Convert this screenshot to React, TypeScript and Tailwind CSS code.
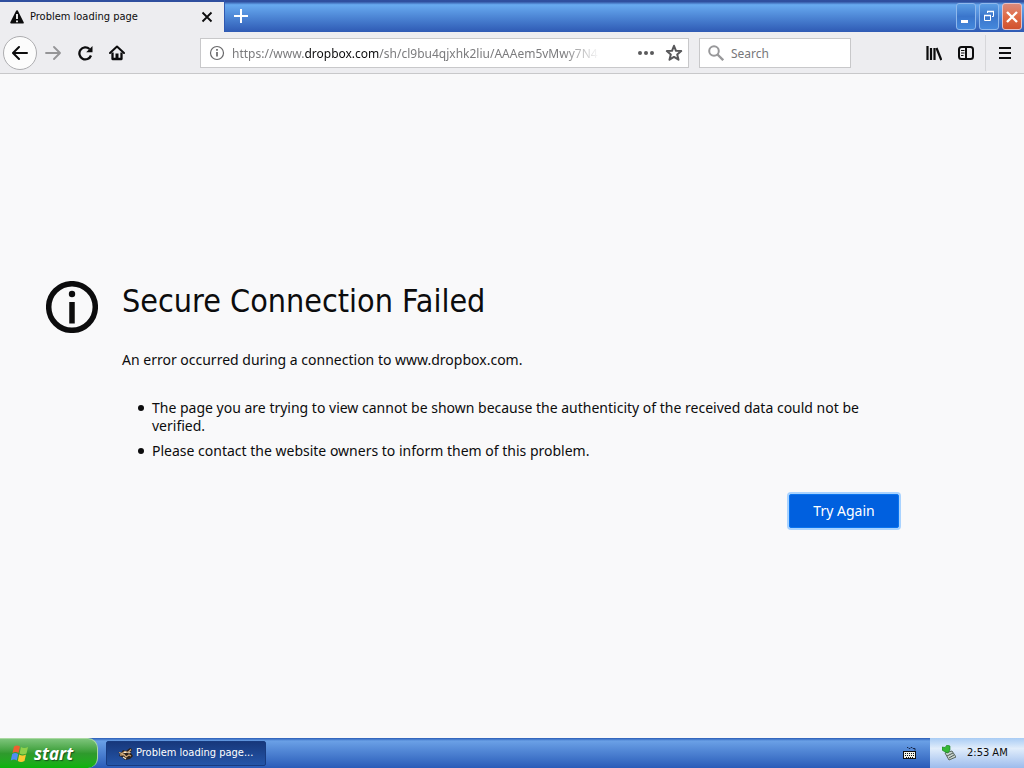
import React from 'react';

const uiFont = "font-['Noto_Sans','DejaVu_Sans_Condensed',sans-serif]";
const narrowFont = "font-['DejaVu_Sans_Condensed','Noto_Sans',sans-serif]";

const errorNotes = [
  'The page you are trying to view cannot be shown because the authenticity of the received data could not be verified.',
  'Please contact the website owners to inform them of this problem.',
];

function WarningIcon() {
  return (
    <svg width="14" height="14" viewBox="0 0 14 14" aria-hidden="true">
      <path d="M7 1.2 12.8 12.6H1.2Z" fill="#0c0c0d" stroke="#0c0c0d" strokeWidth="2" strokeLinejoin="round" />
      <path d="M7 4v5M7 10.4v1.8" stroke="#fff" strokeWidth="1.8" />
    </svg>
  );
}

function XpWindowButton({ label, close, children }: { label: string; close?: boolean; children: React.ReactNode }) {
  return (
    <button
      type="button"
      aria-label={label}
      className={
        close
          ? 'h-[27px] w-5 overflow-hidden rounded-[3px] border border-[#e5c0c5] bg-linear-to-b from-[#d98a7c] via-[#e06a45] to-[#d0512f]'
          : 'h-[27px] w-5 overflow-hidden rounded-[3px] border border-[#8fb8ec] bg-linear-to-b from-[#5b9de4] via-[#3a75cb] to-[#4488dc]'
      }
    >
      <svg width="18" height="25" viewBox="0 0 18 25" fill="none" stroke="#fff" aria-hidden="true">
        {children}
      </svg>
    </button>
  );
}

function TitleBar() {
  return (
    <header className="flex h-8 items-stretch bg-linear-to-b from-[#2f4f9f] from-5% via-[#68aaf0] via-15% to-[#2f5ab4]">
      <div className="mt-[2px] flex w-56 items-center bg-[#ededf0] pr-[9px] pl-[10px]">
        <WarningIcon />
        <span className={`ml-[6px] flex-1 text-[11px] text-[#0c0c0d] ${narrowFont}`}>Problem loading page</span>
        <button type="button" aria-label="Close tab" className="flex size-4 items-center justify-center">
          <svg width="12" height="12" viewBox="0 0 12 12" stroke="#0c0c0d" strokeWidth="1.8" aria-hidden="true">
            <path d="m1.5 1.5 9 9m0-9-9 9" />
          </svg>
        </button>
      </div>
      <button type="button" aria-label="New tab" className="flex w-8 items-center justify-center border-l border-[#2f58b0]">
        <svg width="14" height="14" viewBox="0 0 14 14" stroke="#fff" strokeWidth="2" aria-hidden="true">
          <path d="M7 0v14M0 7h14" />
        </svg>
      </button>
      <div className="flex-1" />
      <div className="flex items-center gap-[3px] pr-[2px]">
        <XpWindowButton label="Minimize">
          <path d="M4 17.5h7" strokeWidth="3" />
        </XpWindowButton>
        <XpWindowButton label="Restore">
          <path d="M7.5 9V7.500h6v5H12" strokeWidth="1" />
          <path d="M7 7.500h7" strokeWidth="1.600" />
          <path d="M4.500 11v5.500h6V11" strokeWidth="1" />
          <path d="M4 11.500h7" strokeWidth="1.600" />
        </XpWindowButton>
        <XpWindowButton label="Close" close>
          <path d="m4 8 10 10M14 8 4 18" strokeWidth="2.4" />
        </XpWindowButton>
      </div>
    </header>
  );
}

function ToolButton({ label, muted, children }: { label: string; muted?: boolean; children: React.ReactNode }) {
  return (
    <button
      type="button"
      aria-label={label}
      className={`flex size-8 items-center justify-center ${muted ? 'text-[#959597]' : 'text-[#0c0c0d]'}`}
    >
      <svg width="16" height="16" viewBox="0 0 16 16" fill="none" stroke="currentColor" strokeWidth="2" aria-hidden="true">
        {children}
      </svg>
    </button>
  );
}

function Toolbar() {
  return (
    <nav className="flex h-[42px] items-center border-b border-[#c8c8ca] bg-[#ededf0]">
      <button
        type="button"
        aria-label="Back"
        className="ml-[3px] flex size-[34px] items-center justify-center rounded-full border border-[#adadb0] bg-[#fcfcfc]"
      >
        <svg width="16" height="16" viewBox="0 0 16 16" fill="none" stroke="#0c0c0d" strokeWidth="2" strokeLinecap="round" strokeLinejoin="round" aria-hidden="true">
          <path d="M15 8H1.500M7 2 1 8l6 6" />
        </svg>
      </button>
      <ToolButton label="Forward" muted>
        <path d="M1 8h13.500M9 2l6 6-6 6" strokeLinecap="round" strokeLinejoin="round" strokeWidth="1.800" />
      </ToolButton>
      <ToolButton label="Reload">
        <path d="M14 10.500A6 6 0 1 1 12.500 4" strokeWidth="2.300" />
        <path d="M15.500 1v6.300H9.200Z" fill="currentColor" stroke="none" />
      </ToolButton>
      <ToolButton label="Home">
        <path d="m1 8 7-6.500L15 8" strokeLinecap="round" strokeLinejoin="round" />
        <path d="M3.500 7.500V14h9V7.500" strokeLinejoin="round" strokeWidth="2.300" />
        <path d="M8 14V8.500" strokeWidth="3" />
      </ToolButton>
      <div className="ml-[67px] flex h-[30px] min-w-0 flex-1 items-center border border-[#c8c8ca] bg-white pr-1 pl-2">
        <svg width="16" height="16" viewBox="0 0 16 16" fill="none" stroke="#68686a" aria-hidden="true">
          <circle cx="8" cy="8" r="6.500" strokeWidth="1.200" />
          <path d="M8 7v4.500M8 4v1.800" strokeWidth="1.700" />
        </svg>
        <a
          href="https://www.dropbox.com/"
          className="ml-[7px] min-w-0 flex-1 overflow-hidden mask-r-from-90% pt-[2px] text-[12px] whitespace-nowrap text-[#7b7b7d]"
        >
          https://www.<span className="text-[#0c0c0d]">dropbox.com</span>/sh/cl9bu4qjxhk2liu/AAAem5vMwy7N4
        </a>
        <button type="button" aria-label="Page actions" className="ml-9 flex size-5 items-center justify-center">
          <svg width="16" height="16" viewBox="0 0 16 16" fill="#5a5a5c" aria-hidden="true">
            <circle cx="2" cy="8" r="2" />
            <circle cx="8" cy="8" r="2" />
            <circle cx="14" cy="8" r="2" />
          </svg>
        </button>
        <button type="button" aria-label="Bookmark this page" className="ml-2 flex size-5 items-center justify-center">
          <svg width="18" height="18" viewBox="0 0 18 18" fill="none" stroke="#58585a" strokeWidth="2" strokeLinejoin="round" aria-hidden="true">
            <path d="m9 1.800 2 5 5.200.300-4 3.400 1.300 5.200L9 12.900l-4.500 2.800 1.300-5.200-4-3.400L7 6.800Z" />
          </svg>
        </button>
      </div>
      <label className="ml-[10px] flex h-[30px] w-[152px] items-center border border-[#c8c8ca] bg-white pl-2">
        <svg className="shrink-0" width="16" height="16" viewBox="0 0 16 16" fill="none" stroke="#98989a" strokeWidth="2" aria-hidden="true">
          <circle cx="6" cy="6" r="4.800" />
          <path d="m9.500 9.500 5.700 5.700" strokeWidth="2.400" />
        </svg>
        <input
          type="text"
          aria-label="Search"
          placeholder="Search"
          className="ml-[7px] w-full min-w-0 pt-[2px] text-[12px] outline-none placeholder:text-[#77777a]"
        />
      </label>
      <div className="ml-[67px] flex items-center">
        <ToolButton label="Library">
          <path d="M1.500 1v14M5 3v12M8.500 3v12" strokeWidth="2.200" />
          <path d="m10.500 3 4.800 12" strokeWidth="2.200" />
        </ToolButton>
        <ToolButton label="Sidebars">
          <rect x="1" y="2" width="14" height="12" rx="2.500" />
          <path d="M8 2v12" />
          <path d="M3 5.500h3.500M3 8h3.500M3 10.500h2.500" strokeWidth="1" />
        </ToolButton>
      </div>
      <div className="ml-[3px] flex h-9 w-[39px] items-center justify-center border-l border-[#d7d7da]">
        <ToolButton label="Open menu">
          <path d="M2 3h12M2 8h12M2 13h12" />
        </ToolButton>
      </div>
    </nav>
  );
}

function ErrorPage() {
  return (
    <main className="flex flex-1 items-center bg-[#f9f9fa] px-[46px] text-[#0c0c0d]">
      <div className="flex w-full max-w-[854px] items-start gap-6">
        <svg className="shrink-0" width="52" height="52" viewBox="0 0 52 52" fill="none" stroke="#0c0c0d" aria-hidden="true">
          <circle cx="26" cy="26" r="23.300" strokeWidth="5.500" />
          <path d="M26 21v21.500" strokeWidth="5.500" />
          <circle cx="26" cy="13" r="3.200" fill="#0c0c0d" stroke="none" />
        </svg>
        <div className="flex-1">
          <h1 className={`text-[32px] leading-10 ${narrowFont}`}>Secure Connection Failed</h1>
          <p className="mt-[30px] text-[14px] leading-[18px]">An error occurred during a connection to www.dropbox.com.</p>
          <ul className="mt-[30px] space-y-[7px] pr-6 pl-4 text-[14px] leading-[18px]">
            {errorNotes.map((note) => (
              <li
                key={note}
                className="flex gap-2 before:mt-[6px] before:size-[6px] before:shrink-0 before:rounded-full before:bg-[#0c0c0d]"
              >
                {note}
              </li>
            ))}
          </ul>
          <div className="mt-[34px] mb-1 flex justify-end pr-px">
            <button type="button" className="h-[34px] w-[110px] rounded-[2px] border border-[#0a74ef] bg-[#0060df] text-[14px] text-white ring-2 ring-[#a9d3ff]">
              Try Again
            </button>
          </div>
        </div>
      </div>
    </main>
  );
}

function WindowsFlag() {
  return (
    <svg width="20" height="20" viewBox="0 0 20 20" aria-hidden="true">
      <path d="M4 2.500Q7 .5 10 2.500L8.500 9Q5.500 7 2.500 9Z" fill="#ee6030" />
      <path d="M11 3Q14 5 18 3L16.500 9.500Q12.500 11.500 9.500 9.500Z" fill="#8ed04b" />
      <path d="M2.200 10Q5 8 8.200 10L6.800 16.500Q4 14.500.8 16.500Z" fill="#4f8df2" />
      <path d="M9.200 10.500Q12.500 12.500 16 10.500L14.500 17Q11 19 7.800 17Z" fill="#fbc931" />
    </svg>
  );
}

function TaskBar() {
  return (
    <footer className="flex h-[30px] items-stretch bg-linear-to-b from-[#2a5cb5] via-[#6aa0e6] via-10% to-[#2a5bb8]">
      <button
        type="button"
        className="flex w-[98px] items-center rounded-r-[10px] border-t border-r border-[#a9d8a0] bg-linear-to-b from-[#7cc47a] via-[#2f9a2d] to-[#08b408] pl-[10px] text-white"
      >
        <WindowsFlag />
        <span className="ml-1 font-['Open_Sans',sans-serif] text-[17px] leading-5 font-bold italic [text-shadow:1px_1px_1px_#14541c]">start</span>
      </button>
      <button
        type="button"
        className={`mt-[3px] mb-[2px] ml-2 flex w-[160px] items-center rounded-[2px] border border-[#183b80] bg-linear-to-b from-[#17387c] to-[#2455a8] pl-[11px] text-[11px] text-white ${narrowFont}`}
      >
        <svg width="15" height="14" viewBox="0 0 15 14" aria-hidden="true">
          <path d="M0 5 3 6 5 3 8 4 12 1l2 1-1 4 2 3-3 3-5 1-3-3-3-1 1-2Z" fill="#2b201c" />
          <path d="m1 5.500 3 1 3-2 3 1 3-3M2 8l4-.5L8 10l3-2 2 1" fill="none" stroke="#d0a878" strokeWidth="1.300" />
          <path d="M6 5.500h2.500M5 10l3 2M10.500 6l2-.5" stroke="#f4e8d4" strokeWidth="1.200" />
        </svg>
        <span className="ml-[3px]">Problem loading page...</span>
      </button>
      <div className="flex-1" />
      <button type="button" aria-label="Keyboard layout" className="flex w-10 items-center justify-center">
        <svg width="14" height="14" viewBox="0 0 14 14" aria-hidden="true">
          <path d="M4 1.500h1l1 1h1l1-1h1l1 1h2v2" fill="none" stroke="#17294b" />
          <rect x=".5" y="5.500" width="12" height="7" fill="#f4f4e8" stroke="#101010" />
          <path d="M2 7.500h10M2 9.500h10M3 11.500h7" stroke="#101010" strokeDasharray="1 1" />
        </svg>
      </button>
      <div className="flex w-[94px] items-center bg-linear-to-b from-[#a9ccf4] via-[#e1edfb] via-35% to-[#9dbcec] pl-3 text-[#0c0c0d]">
        <svg width="14" height="16" viewBox="0 0 14 16" aria-hidden="true">
          <path d="m3 8 7-2 4 6-7 3Z" fill="#c8d3ce" stroke="#58665f" />
          <path d="m5 11 6-3M7 13l5-3" stroke="#4e5b55" />
          <path d="m0 2 3 .5L5 0l3 1v4L6 8 3 7 0 5Z" fill="#35b834" stroke="#187c22" strokeWidth=".6" />
        </svg>
        <time className={`ml-[11px] text-[11px] ${narrowFont}`}>2:53 AM</time>
      </div>
    </footer>
  );
}

export default function App() {
  return (
    <div className={`flex min-h-screen flex-col ${uiFont}`}>
      <TitleBar />
      <Toolbar />
      <ErrorPage />
      <TaskBar />
    </div>
  );
}
